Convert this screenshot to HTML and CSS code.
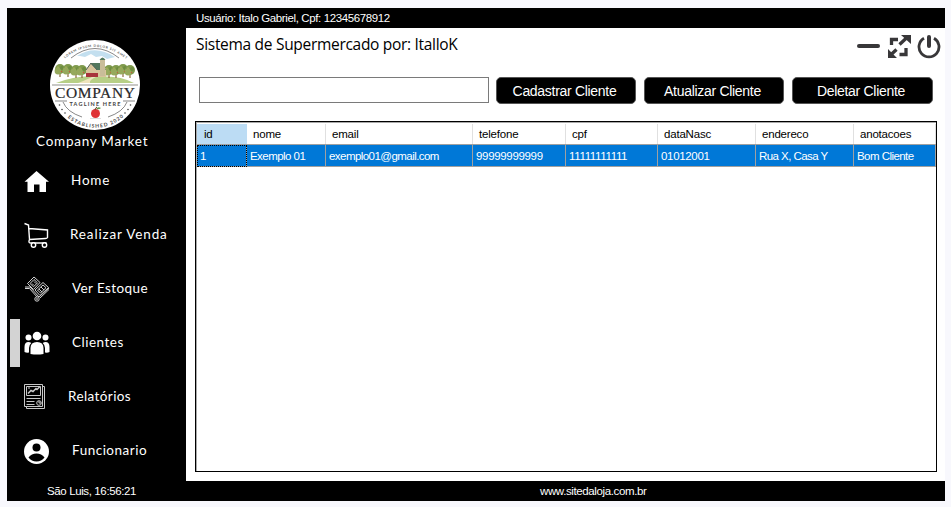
FILE: index.html
```html
<!DOCTYPE html>
<html lang="pt-BR">
<head>
<meta charset="utf-8">
<title>Sistema de Supermercado</title>
<link rel="stylesheet" href="styles.css">
</head>
<body>
<div class="window">
  <aside class="sidebar">
    <svg class="logo" viewBox="0 0 90 90">
      <defs>
        <clipPath id="sky"><path d="M5 43V20L22 17Q45-2 68 17L85 20V43Z"/></clipPath>
        <path id="arc-top" d="M15 18.500Q45-6 79 21"/>
        <path id="arc-bottom" d="M17.500 77.500A42.500 42.500 0 0 0 76 74.500"/>
        <g id="tree"><path d="M-.6-2h1.200v10h-1.200z" fill="#8a6a3c"/><circle r="5" fill="#7f9a4c"/><circle cx="-2" cy="2" r="3.400" fill="#96a95c"/><circle cx="2" cy="-1" r="2" fill="#6d8c40"/><circle cx="1.500" cy="2.500" r=".7" fill="#c9543c"/><circle cx="-2" cy="-2" r=".6" fill="#d8c86a"/></g>
      </defs>
      <circle cx="45" cy="45" r="45" fill="#fff"/>
      <g clip-path="url(#sky)"><path d="M27 16Q45 4 65 17l-8 2-5-3-6 1-5-3-6 3-5-1z" fill="#c3dfef"/><path d="M6 43Q30 34 48 37Q68 35 84 43Z" fill="#b7cf86"/><path d="M28 43Q38 39 42 37h4Q39 40 40 43Z" fill="#eee4bd"/></g>
      <use href="#tree" x="10" y="29"/><use href="#tree" x="18" y="29"/><use href="#tree" x="26" y="30"/><use href="#tree" x="32" y="30"/><use href="#tree" x="59" y="30"/><use href="#tree" x="66" y="30"/><use href="#tree" x="73" y="29"/><use href="#tree" x="80" y="30"/>
      <path d="M36 29l5-6 9 0 6 6v8H36z" fill="#d9c49c"/><path d="M40 23h10l6 7h-9z" fill="#52775d"/><path d="M36 30l5-7 6 7" fill="none" stroke="#52655b"/><path d="M36 33h12v4H36z" fill="#a8333b"/><path d="M50 19h5v17h-5z" fill="#c9bd99"/><path d="M49.500 20q3-5 6 0z" fill="#52775d"/>
      <path d="M21 18Q45-1 69 18" fill="none" stroke="#555" stroke-width=".7"/>
      <path d="M2 45h86" stroke="#c8c8c5" stroke-width="1.800"/>
      <text class="logo-name" x="45" y="58.300" text-anchor="middle" textLength="80">COMPANY</text>
      <text class="logo-tag" x="45" y="65.500" text-anchor="middle" textLength="51">TAGLINE HERE</text>
      <path d="M5 61H17M73 61H85M13 62Q17 72 32 77M77 62Q73 72 58 77" fill="none" stroke="#555" stroke-width=".7"/>
      <circle cx="45.500" cy="73.500" r="4.500" fill="#df3236"/><path d="M45 70q0-2 2-3" fill="none" stroke="#694127"/><path d="M46 69q2-3 5-1q-2 2-5 1" fill="#63984b"/><path d="M40 78.500h11" stroke="#bbb" stroke-width=".5"/>
      <g fill="#444"><circle cx="9.500" cy="65" r=".8"/><circle cx="12" cy="69.500" r=".8"/><circle cx="15" cy="73" r=".8"/><circle cx="80.500" cy="65" r=".8"/><circle cx="78" cy="69.500" r=".8"/><circle cx="75" cy="73" r=".8"/></g>
      <text class="logo-arc"><textPath href="#arc-top" textLength="67">LOREM IPSUM DOLOR SIT AMET</textPath></text>
      <text class="logo-est"><textPath href="#arc-bottom" textLength="61">ESTABLISHED 2020</textPath></text>
    </svg>
    <div class="brand">Company Market</div>
    <nav class="menu">
      <a class="item home"><svg class="icon" viewBox="0 0 26 26"><path d="M12.500 3L.5 13.800H3.500V24H10v-7.500h5.500V24H22V13.800h3z" fill="#fff"/></svg><span>Home</span></a>
      <a class="item sell"><svg class="icon" viewBox="0 0 26 26" fill="none" stroke="#fff" stroke-width="1.400"><path d="M.5 1.500l4 1.500 1 14.500q-1.500 3.500 1 3.500H22.500M5 6.500l18.500 1.500v7.500q-.5 1-2 1l-16 1"/><circle cx="9.500" cy="23" r="2.200" fill="#000"/><circle cx="20.500" cy="23" r="2.200" fill="#000"/></svg><span>Realizar Venda</span></a>
      <a class="item stock"><svg class="icon" viewBox="0 0 26 26" fill="none" stroke="#d2d2d2" stroke-width="1"><path d="M1 11l5 0 9 10M1 12.500h4.500l8 9M15 21l10-9M16 22l9-8.500"/><path d="M10 1l6 5.500-6.500 7L3.500 7.500zM19 6.500l5.500 5-8.500 8-5-5.500z"/><path d="M10 3.500l3.500 3.300-4 4L6 7.500zM10 5.500l2 2M8 7.500l2 2M19 9l3 2.700-5.500 5.300-3-3zM17 11l3 3M15 13l3 3"/><circle cx="13" cy="23" r="2.200" fill="#000"/><circle cx="13" cy="23" r=".5"/></svg><span>Ver Estoque</span></a>
      <a class="item clients active"><svg class="icon" viewBox="0 0 26 26" fill="#fff"><circle cx="13" cy="6" r="4.300"/><circle cx="4.500" cy="7.500" r="3"/><circle cx="21.500" cy="7.500" r="3"/><path d="M6.500 24v-6q0-6 6.500-6t6.500 6v6q-6.500 1-13 0zM.5 22v-5q0-5 4-5 1.500 0 2.800 1Q5 15 5 18v4.500q-2.500.5-4.500-.5zM25.500 22v-5q0-5-4-5-1.500 0-2.800 1Q21 15 21 18v4.500q2.500.5 4.500-.5z"/></svg><span>Clientes</span></a>
      <a class="item reports"><svg class="icon" viewBox="0 0 26 26" fill="none" stroke="#c8c8c8" stroke-width="1"><path d="M.5.500h18v22H.5zM19 2.500h1.500v22h-18V23M2.500 2.500h14v9h-14zM2.500 14.500h14M2.500 17.500h8M2.500 20.500h8"/><path d="M4 9.500l3-3 2 1 3-3 1 1 3-3" stroke-width="1.500"/><path d="M4 4h2"/><circle cx="15" cy="19" r="2.300"/><path d="M15 17v2h2"/></svg><span>Relatórios</span></a>
      <a class="item staff"><svg class="icon" viewBox="0 0 26 26"><circle cx="12.500" cy="13.500" r="12.500" fill="#fff"/><circle cx="12.500" cy="9.500" r="4"/><path d="M4.500 19.500q3-4 8-4t8 4q-3 4-8 4t-8-4z"/></svg><span>Funcionario</span></a>
    </nav>
    <div class="clock">São Luis, 16:56:21</div>
  </aside>
  <main class="main">
    <div class="userbar">Usuário: Italo Gabriel, Cpf: 12345678912</div>
    <section class="content">
      <header class="titlebar">
        <h1>Sistema de Supermercado por: ItalloK</h1>
        <svg class="controls" viewBox="0 0 84 24" fill="none" stroke="#383739"><path d="M2 11h19" stroke-width="4" stroke-linecap="round"/><path d="M34.500 10V4.500H41M49 13v6.500h-6.500M42.500 9.500L50 2.500M39.500 14.500L32 21.500" stroke-width="3.300"/><path d="M44 0h10v9zM31 14v9h9z" fill="#383739" stroke="none"/><path d="M67 3.200a10 10 0 1 0 10 0" stroke-width="2.800"/><path d="M72 2v9" stroke-width="4" stroke-linecap="round"/></svg>
      </header>
      <div class="toolbar">
        <input class="search" type="text" aria-label="Buscar">
        <button class="add">Cadastrar Cliente</button>
        <button>Atualizar Cliente</button>
        <button class="delete">Deletar Cliente</button>
      </div>
      <div class="grid">
        <div class="row head"><span class="picked">id</span><span>nome</span><span>email</span><span>telefone</span><span>cpf</span><span>dataNasc</span><span>endereco</span><span>anotacoes</span></div>
        <div class="row data"><span class="focus">1</span><span>Exemplo 01</span><span class="mail">exemplo01@gmail.com</span><span class="num">99999999999</span><span class="num">11111111111</span><span class="num">01012001</span><span>Rua X, Casa Y</span><span>Bom Cliente</span></div>
      </div>
    </section>
    <footer class="footer">www.sitedaloja.com.br</footer>
  </main>
</div>
</body>
</html>
```
FILE: styles.css
```css
* { box-sizing: border-box; }
body {
  margin: 0;
  padding: 8px 6px 6px 7px;
  height: 507px;
  background: #f8f8fd;
  font: 11.5px/20px "Liberation Sans", sans-serif;
  letter-spacing: -0.38px;
  overflow: hidden;
}
.window { display: flex; height: 493px; background: #000; color: #fff; }
.sidebar { width: 179px; display: flex; flex-direction: column; }
.logo { width: 90px; height: 90px; margin: 32px 0 0 43px; display: block; }
.logo-name { font: 15.5px "Liberation Serif", serif; letter-spacing: 0; fill: #29282a; stroke: #29282a; stroke-width: 0.2px; }
.logo-tag { font: bold 5.5px Lato, sans-serif; letter-spacing: 0; fill: #444; }
.logo-arc { font: bold 3.2px Lato, sans-serif; letter-spacing: 0; fill: #555; }
.logo-est { font: bold 5px Lato, sans-serif; letter-spacing: 0; fill: #444; }
.brand {
  height: 24px;
  padding-left: 29px;
  font: 13.5px/22px Lato, sans-serif;
  letter-spacing: 0.75px;
  white-space: nowrap;
}
.menu { font: 13.5px/18px Lato, sans-serif; letter-spacing: 0.5px; }
.item { display: flex; align-items: center; height: 54px; padding-left: 7px; border-left: 10px solid #000; }
.item span { margin: -2px 0 0 20px; white-space: nowrap; }
.icon { width: 26px; height: 26px; flex: none; }
.home span { margin-left: 21px; letter-spacing: 0.8px; }
.sell span { letter-spacing: 0.85px; }
.stock span, .clients span, .staff span { margin-left: 22px; }
.stock span, .reports span { letter-spacing: 0.4px; }
.reports span { margin-left: 18px; }
.active {
  height: 48px;
  margin: 3px 0 3px 3px;
  padding-left: 4px;
  border-color: #d3d3d3;
}
.clock { margin-top: 3px; padding-left: 40px; }
.main { flex: 1; display: flex; flex-direction: column; }
.userbar { height: 20px; padding-left: 10px; }
.content { flex: 1; background: #fff; color: #000; padding: 5px 8px 9px 9px; display: flex; flex-direction: column; }
.titlebar { display: flex; justify-content: space-between; height: 30px; }
h1 { margin: 0 0 0 1px; font: 15.5px/23px "Open Sans", sans-serif; letter-spacing: -0.3px; }
.controls { width: 84px; height: 24px; margin: 2px -4px 0 0; }
.toolbar { display: flex; gap: 8px; height: 27px; margin: 14px 0 17px 4px; }
.search { width: 290px; height: 26px; border: 1px solid #7a7a7a; padding: 3px; background: #fff; }
button {
  width: 140px;
  height: 27px;
  position: relative;
  left: -1px;
  padding: 0 3px 0 0;
  border: 1px solid #555;
  border-radius: 5px;
  background: #000;
  color: #fff;
  font: 14px/24px "Liberation Sans", sans-serif;
  letter-spacing: -0.3px;
}
.delete { width: 141px; }
.grid { flex: 1; border: 1px solid #000; box-shadow: inset 1px 1px #a9a9a9; padding: 2px 0 0 1px; }
.row { display: grid; grid-template-columns: 50px 79px 147px 93px 92px 98px 98px 82px; }
.head { height: 21px; border-bottom: 1px solid #a0a0a0; letter-spacing: -0.2px; }
.head span { padding-left: 6px; border-right: 1px solid #e0e0e0; }
.head .picked { padding-left: 7px; background: #bcdcf4; border-color: #bcdcf4; }
.data { height: 22px; background: #0078d7; color: #fff; border-bottom: 1px solid #a0a0a0; line-height: 22px; letter-spacing: -0.55px; }
.data .num { letter-spacing: -0.33px; }
.data span { padding-left: 3px; border-right: 1px solid #a0a0a0; }
.data .focus { outline: 1px dotted #000; outline-offset: -1px; }
.footer { height: 20px; padding-left: 354px; }
```
